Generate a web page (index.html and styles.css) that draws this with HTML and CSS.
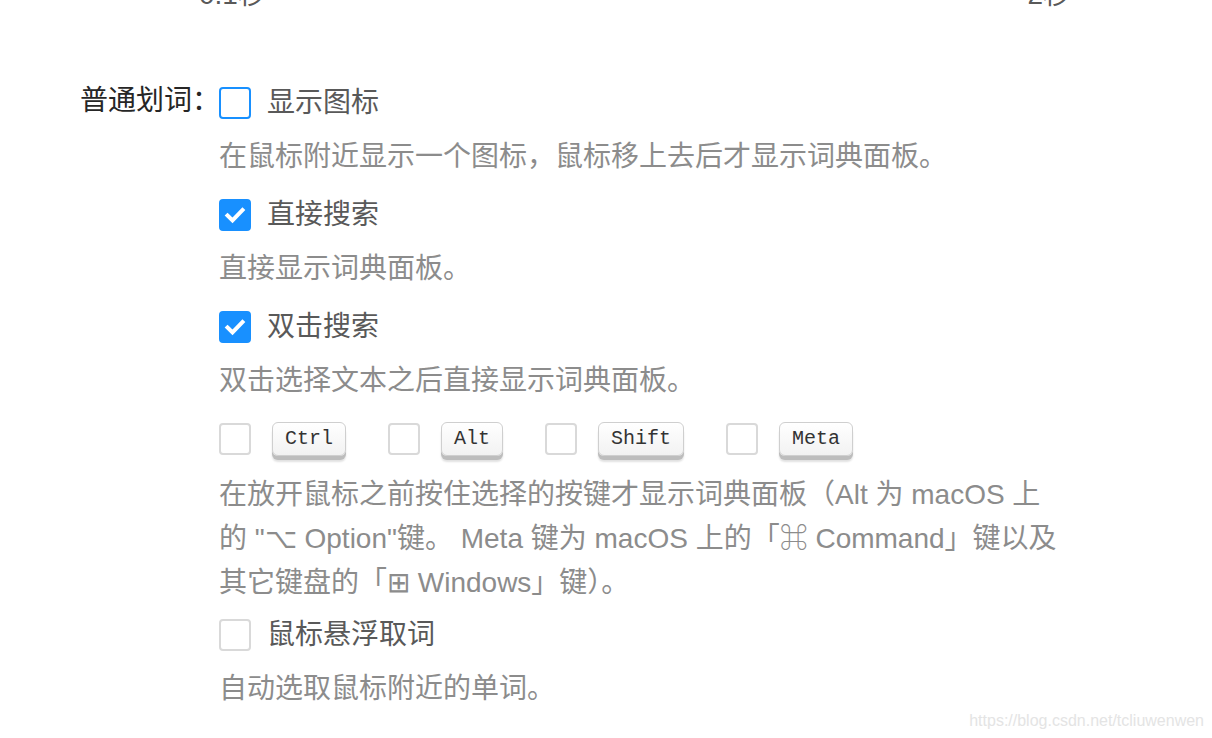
FILE: index.html
```html
<!DOCTYPE html>
<html lang="zh-CN">
<head>
<meta charset="utf-8">
<title>普通划词</title>
<link rel="stylesheet" href="styles.css">
</head>
<body>
<div class="marks"><span>0.1秒</span><span>2秒</span></div>

<div class="form-item">
  <div class="form-label">普通划词：</div>
  <div class="form-control">
    <label class="check-row">
      <span class="checkbox checkbox-focus"></span>
      <span class="check-text">显示图标</span>
    </label>
    <p class="desc">在鼠标附近显示一个图标，鼠标移上去后才显示词典面板。</p>

    <label class="check-row">
      <span class="checkbox checkbox-checked"><svg viewBox="0 0 32 32" width="32" height="32"><polyline points="8.5,16.5 13.5,21.5 23.5,11" fill="none" stroke="#fff" stroke-width="4" stroke-linecap="square" stroke-linejoin="miter"/></svg></span>
      <span class="check-text">直接搜索</span>
    </label>
    <p class="desc">直接显示词典面板。</p>

    <label class="check-row">
      <span class="checkbox checkbox-checked"><svg viewBox="0 0 32 32" width="32" height="32"><polyline points="8.5,16.5 13.5,21.5 23.5,11" fill="none" stroke="#fff" stroke-width="4" stroke-linecap="square" stroke-linejoin="miter"/></svg></span>
      <span class="check-text">双击搜索</span>
    </label>
    <p class="desc">双击选择文本之后直接显示词典面板。</p>

    <div class="key-row">
      <label class="key-item"><span class="checkbox"></span><kbd class="key">Ctrl</kbd></label>
      <label class="key-item"><span class="checkbox"></span><kbd class="key">Alt</kbd></label>
      <label class="key-item"><span class="checkbox"></span><kbd class="key">Shift</kbd></label>
      <label class="key-item"><span class="checkbox"></span><kbd class="key">Meta</kbd></label>
    </div>
    <p class="desc desc-long">在放开鼠标之前按住选择的按键才显示词典面板（Alt 为 macOS 上的 "⌥ Option"键。 Meta 键为 macOS 上的「⌘ Command」键以及其它键盘的「⊞ Windows」键）。</p>

    <label class="check-row">
      <span class="checkbox"></span>
      <span class="check-text">鼠标悬浮取词</span>
    </label>
    <p class="desc">自动选取鼠标附近的单词。</p>
  </div>
</div>

<div class="watermark">https://blog.csdn.net/tcliuwenwen</div>
</body>
</html>
```

FILE: styles.css
```css
html, body {
  margin: 0;
  padding: 0;
  background: #fff;
}

body {
  position: relative;
  width: 1212px;
  height: 738px;
  overflow: hidden;
  font-family: "Liberation Sans", "Noto Sans CJK SC", sans-serif;
  font-size: 28px;
  line-height: 44px;
  color: #595959;
}

.marks {
  display: flex;
  justify-content: space-between;
  margin-top: -27px;
  height: 44px;
  padding: 0 141px 0 199px;
  color: #595959;
}

.form-item {
  display: flex;
  margin-top: 64px;
  padding-left: 80px;
}

.form-label {
  width: 139px;
  flex: none;
  white-space: nowrap;
  color: #262626;
  line-height: 40px;
}

.form-control {
  width: 842px;
}

.check-row {
  display: flex;
  align-items: center;
  height: 44px;
}

.checkbox {
  box-sizing: border-box;
  width: 32px;
  height: 32px;
  flex: none;
  border: 2px solid #d9d9d9;
  border-radius: 4px;
  background: #fff;
  display: flex;
}

.checkbox-focus {
  border-color: #1890ff;
}

.checkbox-checked {
  border-color: #1890ff;
  background: #1890ff;
}

.checkbox-checked svg {
  margin: -2px;
}

.check-text {
  padding-left: 16px;
  color: #595959;
}

.desc {
  margin: 10px 0 14px;
  color: #8c8c8c;
}

.desc-long {
  margin-top: 12px;
  margin-bottom: 8px;
}

.key-row {
  display: flex;
  align-items: center;
  height: 44px;
  gap: 42px;
}

.key-item {
  display: flex;
  align-items: center;
  gap: 21px;
}

.key {
  box-sizing: border-box;
  display: inline-block;
  height: 34px;
  padding: 0 12px;
  border: 1px solid #cfcfcf;
  border-radius: 6px;
  background: linear-gradient(#ffffff, #f2f2f2);
  box-shadow: 0 4px 0 #bdbdbd, 0 6px 2px rgba(0, 0, 0, 0.12), inset 0 1px 0 #fff;
  font-family: "Liberation Mono", "DejaVu Sans Mono", monospace;
  font-size: 20px;
  line-height: 31px;
  color: #333;
}

.watermark {
  position: absolute;
  right: 8px;
  bottom: 7px;
  font-family: "Liberation Sans", sans-serif;
  font-size: 16px;
  line-height: 20px;
  color: #e4e4e4;
}
```
